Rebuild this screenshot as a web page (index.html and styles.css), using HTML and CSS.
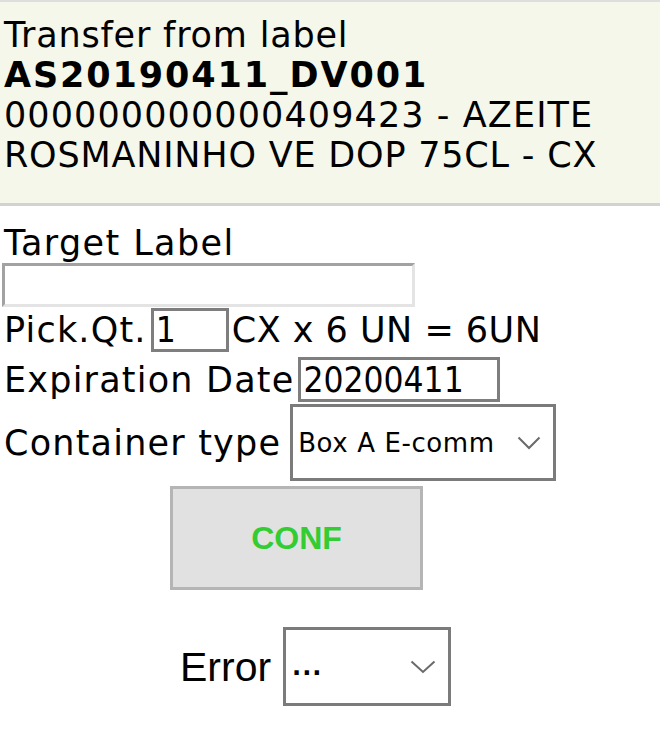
FILE: index.html
```html
<!DOCTYPE html>
<html lang="en">
<head>
<meta charset="utf-8">
<title>Transfer from label</title>
<link rel="stylesheet" href="styles.css">
</head>
<body>
<div class="header">
  <div class="line">Transfer from label</div>
  <div class="line strong">AS20190411_DV001</div>
  <div class="line digits">000000000000409423 - AZEITE</div>
  <div class="line">ROSMANINHO VE DOP 75CL - CX</div>
</div>
<div class="form">
  <div class="caption">Target Label</div>
  <input class="field field-target" type="text" value="">
  <div class="row row-pick">
    <span class="text">Pick.Qt.</span>
    <input class="field field-qty" type="text" value="1">
    <span class="text text-tight">CX x 6 UN = 6UN</span>
  </div>
  <div class="row row-exp">
    <span class="text">Expiration Date</span>
    <input class="field field-exp" type="text" value="20200411">
  </div>
  <div class="row row-container">
    <span class="text">Container type</span>
    <div class="select select-container">
      <span class="select-text">Box A E-comm</span>
      <svg class="chevron" width="24" height="14" viewBox="0 0 24 14"><polyline points="1.5,1.5 12,12 22.5,1.5" fill="none" stroke="#6a6a6a" stroke-width="2"/></svg>
    </div>
  </div>
  <div class="btn-row">
    <div class="btn-conf">CONF</div>
  </div>
  <div class="row row-error">
    <span class="error-label">Error</span>
    <div class="select select-error">
      <span class="select-text select-dots">...</span>
      <svg class="chevron" width="26" height="14" viewBox="0 0 26 14"><polyline points="1.5,1.5 13,12 24.5,1.5" fill="none" stroke="#6a6a6a" stroke-width="2"/></svg>
    </div>
  </div>
</div>
</body>
</html>
```
FILE: styles.css
```css
html, body {
  margin: 0;
  padding: 0;
  background: #ffffff;
}
body {
  font-family: "DejaVu Sans", Verdana, sans-serif;
  font-size: 35px;
  color: #000000;
}
.header {
  background: #f4f7ea;
  border-top: 2px solid #dedede;
  border-bottom: 3px solid #d2d2d2;
  padding: 13px 4px 28px 4px;
  line-height: 40px;
  white-space: nowrap;
  letter-spacing: 0.8px;
}
.strong {
  font-weight: bold;
  letter-spacing: 1.9px;
}
.digits {
  letter-spacing: 1.1px;
}
.form {
  padding: 17px 0 0 0;
}
.caption {
  line-height: 40px;
  padding-left: 4px;
  letter-spacing: 1.4px;
}
.field {
  box-sizing: border-box;
  font-family: "DejaVu Sans Condensed", "DejaVu Sans", sans-serif;
  font-stretch: condensed;
  font-size: 35px;
  color: #000000;
  background: #ffffff;
  border: 3px solid #7e7e7e;
  padding: 0 0 0 2px;
  margin: 0;
  outline: none;
}
.field-target {
  display: block;
  width: 413px;
  height: 44px;
  margin-left: 2px;
  border-color: #a2a2a2 #e4e4e4 #e4e4e4 #a2a2a2;
}
.row {
  display: flex;
  align-items: center;
  padding-left: 4px;
  white-space: nowrap;
}
.text {
  letter-spacing: 1.2px;
}
.text-tight {
  letter-spacing: 0.5px;
}
.row-pick {
  height: 44px;
  margin-top: 1px;
}
.field-qty {
  width: 78px;
  height: 44px;
  margin: 0 3px 0 4px;
}
.row-exp {
  height: 45px;
  margin-top: 5px;
}
.field-exp {
  width: 202px;
  height: 45px;
  margin-left: 4px;
}
.row-container {
  height: 77px;
  margin-top: 2px;
}
.select {
  box-sizing: border-box;
  display: flex;
  align-items: center;
  justify-content: space-between;
  border: 3px solid #7b7b7b;
  background: #ffffff;
}
.select-text {
  font-size: 26px;
  letter-spacing: 0.6px;
}
.select-container {
  width: 266px;
  height: 77px;
  margin-left: 9px;
  padding: 0 12px 0 5px;
}
.btn-row {
  display: flex;
  margin-top: 5px;
  padding-left: 170px;
}
.btn-conf {
  box-sizing: border-box;
  width: 253px;
  height: 104px;
  background: #e1e1e1;
  border: 3px solid #b5b5b5;
  display: flex;
  align-items: center;
  justify-content: center;
  font-family: "Liberation Sans", Arial, sans-serif;
  font-weight: bold;
  font-size: 32px;
  color: #33cc33;
}
.row-error {
  height: 79px;
  margin-top: 37px;
  padding-left: 180px;
}
.error-label {
  font-family: "Liberation Sans", Arial, sans-serif;
  font-size: 41px;
  margin-top: 2px;
}
.select-error {
  width: 168px;
  height: 79px;
  margin-left: 12px;
  padding: 0 12px 0 6px;
}
.select-dots {
  font-weight: bold;
  font-size: 24px;
  letter-spacing: 1px;
}
```
